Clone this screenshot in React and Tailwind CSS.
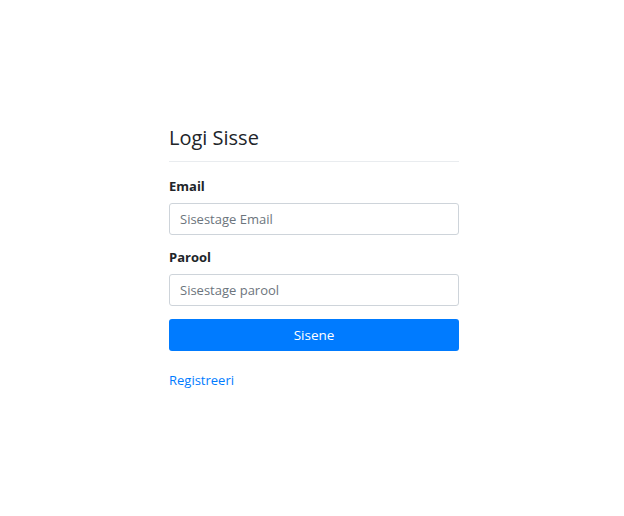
export default function App() {
  return (
    <div className="min-h-[516px] w-[624px] bg-white pl-[4px] pt-[126px]" style={{ fontFamily: '"Open Sans", "Noto Sans", sans-serif' }}>
      <div className="mx-auto w-[290px]">
        <h2 className="text-[20px] leading-[24px] text-[#212529] font-medium">Logi Sisse</h2>
        <hr className="mt-[11px] border-t border-[#e9ecef]" />
        <div className="mt-[15px]">
          <label className="block text-[13px] leading-[18px] font-bold text-[#212529]">Email</label>
          <input
            type="email"
            placeholder="Sisestage Email"
            className="mt-[8px] block h-[32px] w-full rounded-[3px] border border-[#ced4da] px-[10px] text-[13px] text-[#495057] placeholder:text-[#6c757d] outline-none"
          />
        </div>
        <div className="mt-[13px]">
          <label className="block text-[13px] leading-[18px] font-bold text-[#212529]">Parool</label>
          <input
            type="password"
            placeholder="Sisestage parool"
            className="mt-[8px] block h-[32px] w-full rounded-[3px] border border-[#ced4da] px-[10px] text-[13px] text-[#495057] placeholder:text-[#6c757d] outline-none"
          />
        </div>
        <button className="mt-[13px] block h-[32px] w-full rounded-[3px] bg-[#007bff] text-[13.5px] text-white">Sisene</button>
        <a href="#" className="mt-[20px] block text-[13px] leading-[18px] text-[#007bff]">Registreeri</a>
      </div>
    </div>
  );
}
